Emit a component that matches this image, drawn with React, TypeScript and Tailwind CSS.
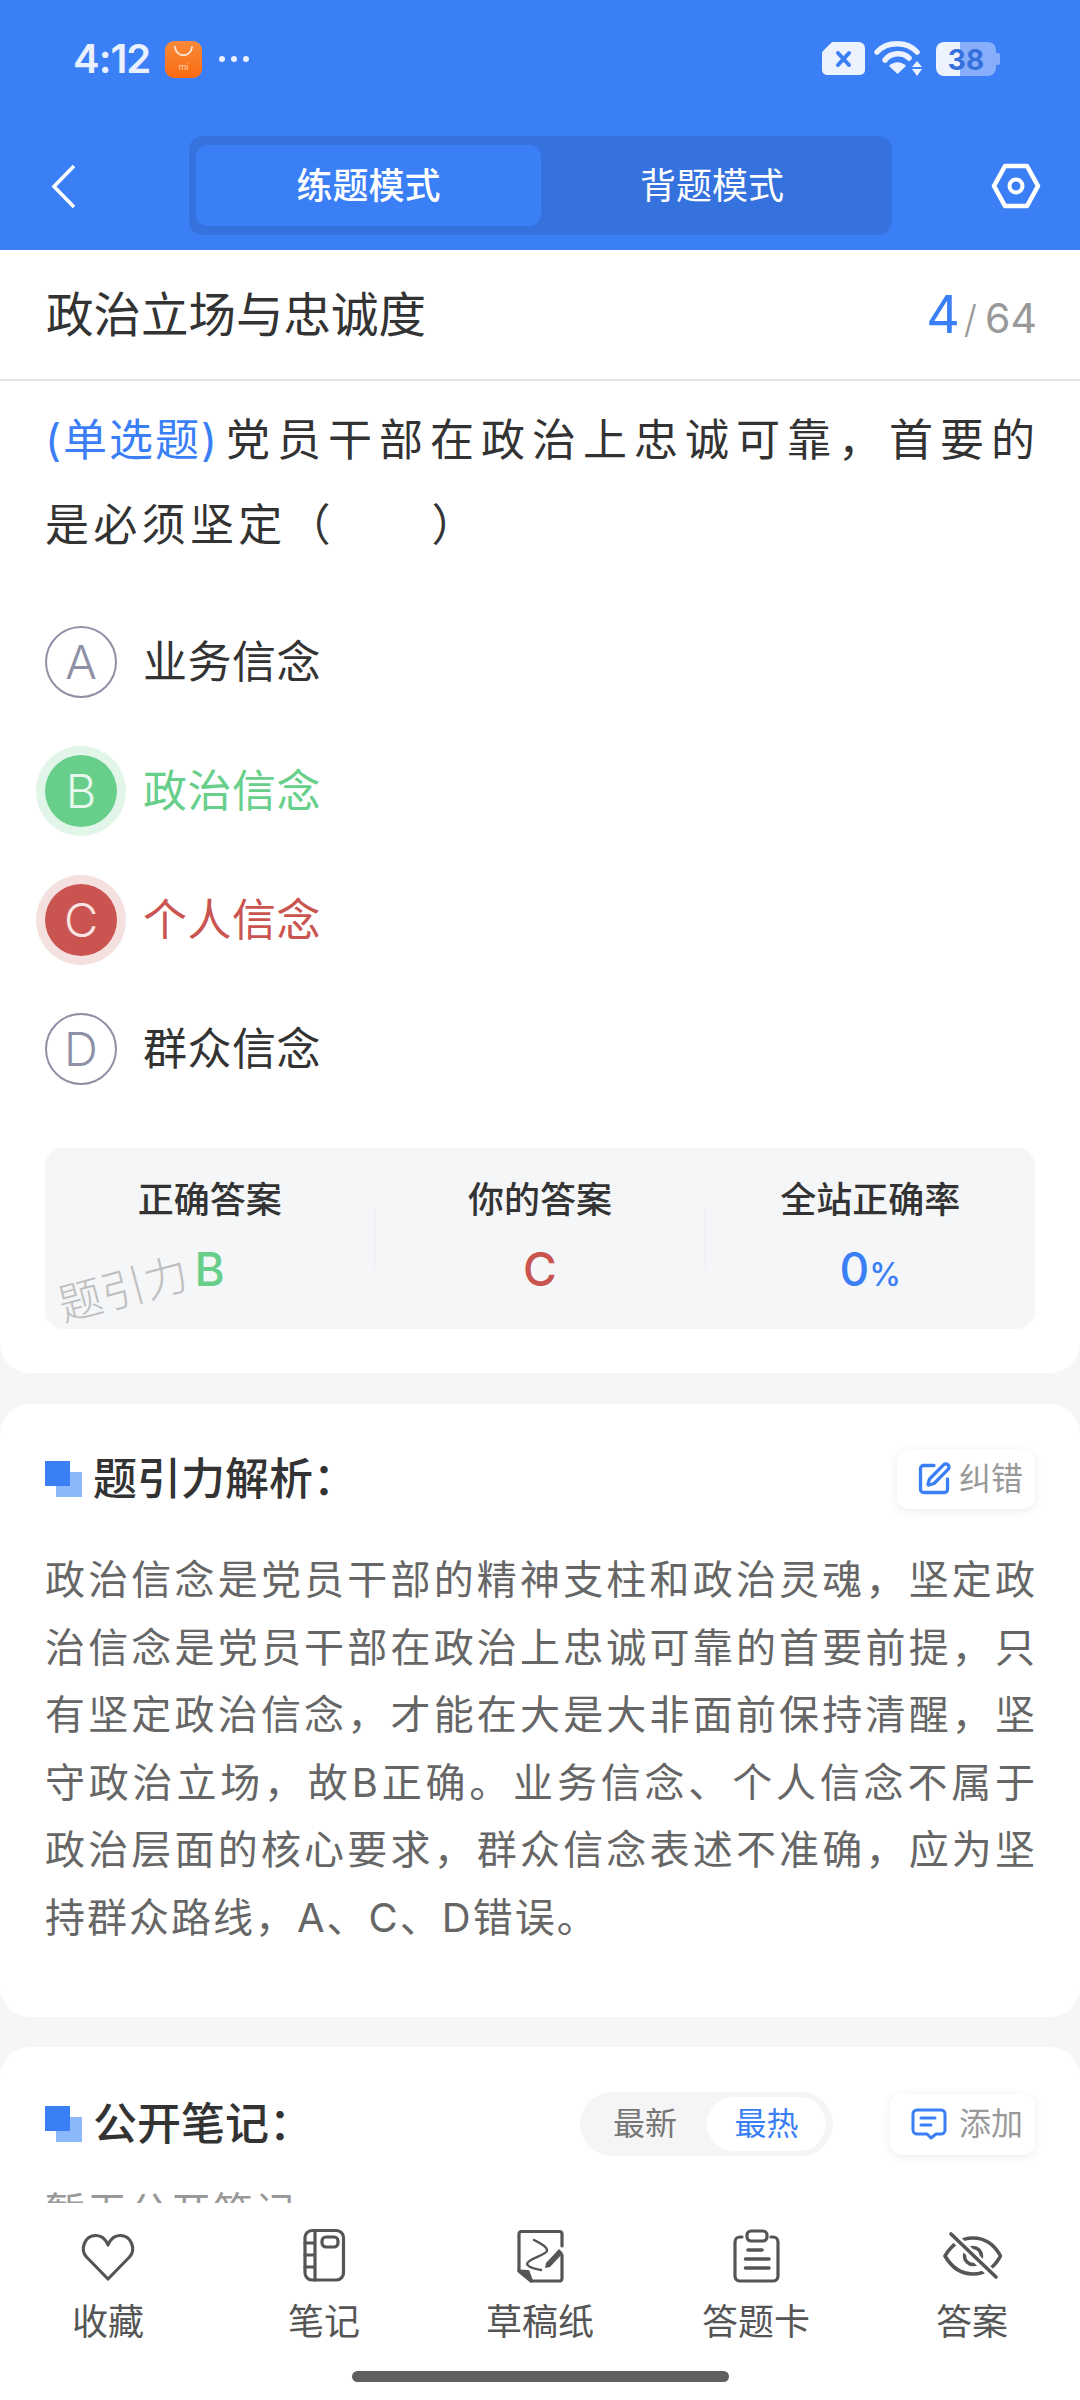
import React from "react";
import { SquarePen } from "lucide-react";

const FONT = "font-[Inter,'Noto_Sans_CJK_SC',sans-serif]";

function SectionMark() {
  return (
    <div className="relative h-[36px] w-[37px] shrink-0">
      <div className="absolute left-[11px] top-[11px] h-[25px] w-[26px] bg-[#8bb8fb]" />
      <div className="absolute left-0 top-0 h-[25px] w-[25px] bg-[#3b7ff7]" />
    </div>
  );
}

function Option({ letter, text, state }: { letter: string; text: string; state?: "right" | "wrong" }) {
  const circle =
    state === "right"
      ? "bg-[#67cf8a] text-[#e6f8ec] shadow-[0_0_0_9px_#e1f5e8]"
      : state === "wrong"
        ? "bg-[#ca5450] text-[#f8e4e3] shadow-[0_0_0_9px_#f5e0e0]"
        : "border-2 border-[#8e90a6] text-[#8e90a6]";
  const color = state === "right" ? "text-[#67cf8a]" : state === "wrong" ? "text-[#ca5450]" : "text-[#333333]";
  return (
    <div className="flex h-[72px] items-center">
      <div className={`flex h-[72px] w-[72px] shrink-0 items-center justify-center rounded-full text-[47px] font-light ${circle}`}>
        {letter}
      </div>
      <div className={`ml-[26px] text-[44px] leading-[72px] tracking-[0.5px] ${color}`}>{text}</div>
    </div>
  );
}

function Stat({ label, children }: { label: string; children: React.ReactNode }) {
  return (
    <div className="flex-1 pt-[26px] text-center">
      <div className="text-[36px] font-medium leading-[52px] text-[#333333]">{label}</div>
      <div className="mt-[13px] text-[46px] font-medium leading-[60px]">{children}</div>
    </div>
  );
}

function NavItem({ label, children }: { label: string; children: React.ReactNode }) {
  return (
    <div className="flex flex-1 flex-col items-center">
      <svg width="60" height="60" viewBox="0 0 60 60" fill="none" stroke="#555555" strokeWidth="3.2" strokeLinecap="round" strokeLinejoin="round">
        {children}
      </svg>
      <div className="mt-[11px] text-[36px] leading-[50px] text-[#555555]">{label}</div>
    </div>
  );
}

export default function App() {
  return (
    <div className={`flex h-[2400px] w-[1080px] flex-col overflow-hidden bg-[#f4f6f8] ${FONT}`}>
      <header className="h-[250px] shrink-0 bg-[#3b7ff7]">
        {/* status bar */}
        <div className="flex h-[118px] items-center pl-[73px] pr-[80px]">
          <span className="text-[40px] font-semibold tracking-[-1px] text-[#e9f0fe]">4:12</span>
          <svg className="ml-[15px]" width="37" height="37" viewBox="0 0 37 37">
            <defs>
              <linearGradient id="mi" x1="0" y1="0" x2="0" y2="1">
                <stop offset="0" stopColor="#f98a3a" />
                <stop offset="1" stopColor="#fb6a10" />
              </linearGradient>
            </defs>
            <rect width="37" height="37" rx="9" fill="url(#mi)" />
            <path d="M10 6 C11 17 26 17 27 6" fill="none" stroke="#fde7d6" strokeWidth="1.8" strokeLinecap="round" />
            <text x="18.5" y="29" textAnchor="middle" fontSize="9" fill="#fcd3b4" fontFamily="Inter">mi</text>
          </svg>
          <div className="ml-[17px] flex gap-[6px]">
            <span className="h-[6px] w-[6px] rounded-full bg-[#e9f0fe]" />
            <span className="h-[6px] w-[6px] rounded-full bg-[#e9f0fe]" />
            <span className="h-[6px] w-[6px] rounded-full bg-[#e9f0fe]" />
          </div>
          <svg className="ml-auto" width="178" height="36" viewBox="0 0 178 36">
            <path d="M12 1 H37 a6 6 0 0 1 6 6 V29 a5 5 0 0 1 -5 5 H5 a5 5 0 0 1 -5 -5 V12 a4 4 0 0 1 1 -2 L9 2 a4 4 0 0 1 3 -1 Z" fill="#ecf2fe" />
            <path d="M16 12 L27 24 M27 12 L16 24" stroke="#3b7ff7" strokeWidth="4" strokeLinecap="round" />
            <path d="M55 11 C65 0 85 0 95 11" fill="none" stroke="#ecf2fe" strokeWidth="5.5" strokeLinecap="round" />
            <path d="M63 19 C69 11 81 11 87 17" fill="none" stroke="#ecf2fe" strokeWidth="5.5" strokeLinecap="round" />
            <path d="M67 25 C72 20 79 20 84 25 L75.5 33 Z" fill="#ecf2fe" />
            <path d="M95 20 L100 26 H90 Z M90 28 H100 L95 35 Z" fill="#ecf2fe" />
            <path d="M138 1 H166 a8 8 0 0 1 8 8 V27 a8 8 0 0 1 -8 8 H138 Z" fill="#87aefb" />
            <path d="M174 12 h2 a2 2 0 0 1 2 2 V22 a2 2 0 0 1 -2 2 h-2 Z" fill="#87aefb" />
            <path d="M122 1 H138 V35 H122 a8 8 0 0 1 -8 -8 V9 a8 8 0 0 1 8 -8 Z" fill="#ecf2fe" />
            <text x="144" y="29" textAnchor="middle" fontSize="28" fontWeight="700" fill="#3570dc" fontFamily="Inter">38</text>
          </svg>
        </div>
        {/* nav */}
        <div className="mt-[18px] flex h-[99px] items-center pl-[50px] pr-[39px]">
          <svg width="26" height="44" viewBox="0 0 26 44" fill="none" stroke="#ffffff" strokeWidth="3.6">
            <path d="M24 2 L4 22.5 L24 43" />
          </svg>
          <div className="ml-[113px] flex h-[99px] w-[703px] rounded-[14px] bg-[#3572dd] p-[7px] pt-[9px]">
            <div className="flex h-[81px] w-[345px] items-center justify-center rounded-[12px] bg-[#3b7ff7] text-[36px] font-medium text-white">
              练题模式
            </div>
            <div className="flex h-[81px] flex-1 items-center justify-center pr-[2px] text-[36px] text-white">背题模式</div>
          </div>
          <svg className="ml-auto" width="50" height="46" viewBox="0 0 50 46" fill="none" stroke="#ffffff" strokeWidth="4.6" strokeLinejoin="round">
            <path d="M14 3 H36 L47 23 L36 43 H14 L3 23 Z" />
            <circle cx="25" cy="23" r="6.5" strokeWidth="4" />
          </svg>
        </div>
      </header>

      <main className="min-h-0 flex-1 overflow-hidden">
        <section className="rounded-b-[30px] bg-white pb-[44px]">
          <div className="flex h-[131px] items-center justify-between border-b-2 border-[#e2e2e2] pl-[46px] pr-[43px]">
            <h1 className="text-[47.5px] font-normal text-[#333333]">政治立场与忠诚度</h1>
            <div className="flex items-baseline text-[#999999]">
              <span className="text-[52px] text-[#3b7ff7]">4</span>
              <span className="ml-[4px] text-[38px] font-light">/</span>
              <span className="ml-[8px] text-[41px]">64</span>
            </div>
          </div>
          <div className="px-[45px]">
            <p className="whitespace-nowrap pt-[17px] text-[44px] leading-[85px] text-[#333333]">
              <span className="tracking-[2px] text-[#3b7ff7]">(单选题)</span>
              <span className="ml-[7px] tracking-[7px]">党员干部在政治上忠诚可靠，首要的</span>
              <br />
              <span className="tracking-[4.3px]">是必须坚定（　　）</span>
            </p>
            <div className="mt-[58px] flex flex-col gap-[57px]">
              <Option letter="A" text="业务信念" />
              <Option letter="B" text="政治信念" state="right" />
              <Option letter="C" text="个人信念" state="wrong" />
              <Option letter="D" text="群众信念" />
            </div>
            <div className="relative mt-[63px] flex h-[181px] rounded-[18px] bg-[#f4f6f8]">
              <Stat label="正确答案">
                <span className="text-[#67cf8a]">B</span>
              </Stat>
              <div className="mt-[60px] h-[60px] w-px bg-[#e9ebee]" />
              <Stat label="你的答案">
                <span className="text-[#ca5450]">C</span>
              </Stat>
              <div className="mt-[60px] h-[60px] w-px bg-[#e9ebee]" />
              <Stat label="全站正确率">
                <span className="text-[#3b7ff7]">
                  0<span className="text-[32px]">%</span>
                </span>
              </Stat>
              <div className="absolute left-[12px] top-[116px] -rotate-[15deg] text-[44px] font-light leading-[50px] text-[#bfbfbf]">
                题引力
              </div>
            </div>
          </div>
        </section>

        <section className="mt-[31px] rounded-[30px] bg-white px-[45px] pb-[66px] pt-[45px]">
          <div className="flex h-[60px] items-center">
            <SectionMark />
            <h2 className="ml-[11px] text-[44px] font-medium text-[#333333]">题引力解析：</h2>
            <div className="ml-auto flex h-[60px] w-[138px] items-center gap-[7px] rounded-[12px] bg-white pl-[19px] shadow-[0_2px_10px_rgba(0,0,0,0.08)]">
              <SquarePen size={36} strokeWidth={2.2} color="#3b7ff7" />
              <span className="text-[32px] text-[#999999]">纠错</span>
            </div>
          </div>
          <p className="-mr-[2px] mt-[37px] text-justify text-[40px] leading-[67.5px] tracking-[2px] text-[#666666]">
            政治信念是党员干部的精神支柱和政治灵魂，坚定政治信念是党员干部在政治上忠诚可靠的首要前提，只有坚定政治信念，才能在大是大非面前保持清醒，坚守政治立场，故B正确。业务信念、个人信念不属于政治层面的核心要求，群众信念表述不准确，应为坚持群众路线，A、C、D错误。
          </p>
        </section>

        <section className="mt-[30px] rounded-t-[30px] bg-white px-[45px] pt-[45px]">
          <div className="flex h-[64px] items-center">
            <SectionMark />
            <h2 className="ml-[11px] text-[44px] font-medium text-[#333333]">公开笔记：</h2>
            <div className="ml-auto flex h-[64px] w-[253px] items-center rounded-full bg-[#f5f5f5] pl-[33px] pr-[7px]">
              <span className="text-[32px] text-[#777777]">最新</span>
              <span className="ml-auto flex h-[54px] w-[119px] items-center justify-center rounded-full bg-white text-[32px] text-[#3b7ff7]">
                最热
              </span>
            </div>
            <div className="ml-[57px] flex h-[61px] w-[145px] items-center gap-[12px] rounded-[12px] bg-white pl-[21px] shadow-[0_2px_10px_rgba(0,0,0,0.08)]">
              <svg width="36" height="32" viewBox="0 0 36 32" fill="none" stroke="#3b7ff7" strokeWidth="3" strokeLinecap="round" strokeLinejoin="round">
                <path d="M6 2 H30 a4 4 0 0 1 4 4 V22 a4 4 0 0 1 -4 4 H25 L20 30 L16 26 H6 a4 4 0 0 1 -4 -4 V6 a4 4 0 0 1 4 -4 Z" />
                <path d="M10 10 H24 M10 17 H20" />
              </svg>
              <span className="text-[32px] text-[#999999]">添加</span>
            </div>
          </div>
          <p className="mt-[28px] text-[40px] leading-[56px] tracking-[2px] text-[#999999]">暂无公开笔记</p>
        </section>
      </main>

      <nav className="h-[197px] shrink-0 bg-white pt-[23px]">
        <div className="flex">
          <NavItem label="收藏">
            <path d="M30 53 L8.5 31 C2 24 6 9.5 18 9.5 C23 9.5 27.5 13 30 19 C32.5 13 37 9.5 42 9.5 C54 9.5 58 24 51.5 31 Z" />
          </NavItem>
          <NavItem label="笔记">
            <rect x="11" y="4.5" width="38.5" height="49.5" rx="7" />
            <path d="M21 4.5 V54 M11 17 H21 M11 29 H21 M11 41 H21" />
            <rect x="28" y="11" width="16" height="10" rx="4" />
          </NavItem>
          <NavItem label="草稿纸">
            <path d="M52 20 V8 a2.5 2.5 0 0 0 -2.5 -2.5 H11.5 a2.5 2.5 0 0 0 -2.5 2.5 V45 L21 55 H49.5 a2.5 2.5 0 0 0 2.5 -2.5 V29" />
            <path d="M9 45 L18 45.5 L21.5 55 Z" fill="#555555" />
            <path d="M24 14 C30 17 38 21 37 25 C36 29 17 33 17 38 C18 42 26 43 31 44" strokeWidth="2.4" />
            <path d="M36 37 L49 23 L53 27 L40 41 L35 42 Z" fill="#555555" stroke="none" />
          </NavItem>
          <NavItem label="答题卡">
            <path d="M16 11 H14 a5 5 0 0 0 -5 5 V50 a5 5 0 0 0 5 5 H47 a5 5 0 0 0 5 -5 V16 a5 5 0 0 0 -5 -5 H45" />
            <rect x="21" y="5" width="20" height="10" rx="4" />
            <path d="M22 24 H36 M19.5 33 H43 M19.5 42 H43" strokeWidth="3.6" />
          </NavItem>
          <NavItem label="答案">
            <path d="M3 30 C10 18 20 12 31 12 C42 12 52 18 58.5 30 C52 42 42 48 31 48 C20 48 10 42 3 30 Z" strokeWidth="3.6" />
            <circle cx="31" cy="30" r="8.5" strokeWidth="3.6" />
            <path d="M9 8 L54 52" stroke="#ffffff" strokeWidth="9" strokeLinecap="butt" />
            <path d="M9 8 L54 51" strokeWidth="3.6" />
          </NavItem>
        </div>
        <div className="mx-auto mt-[24px] h-[11px] w-[377px] rounded-full bg-[#5f5f5f]" />
      </nav>
    </div>
  );
}
